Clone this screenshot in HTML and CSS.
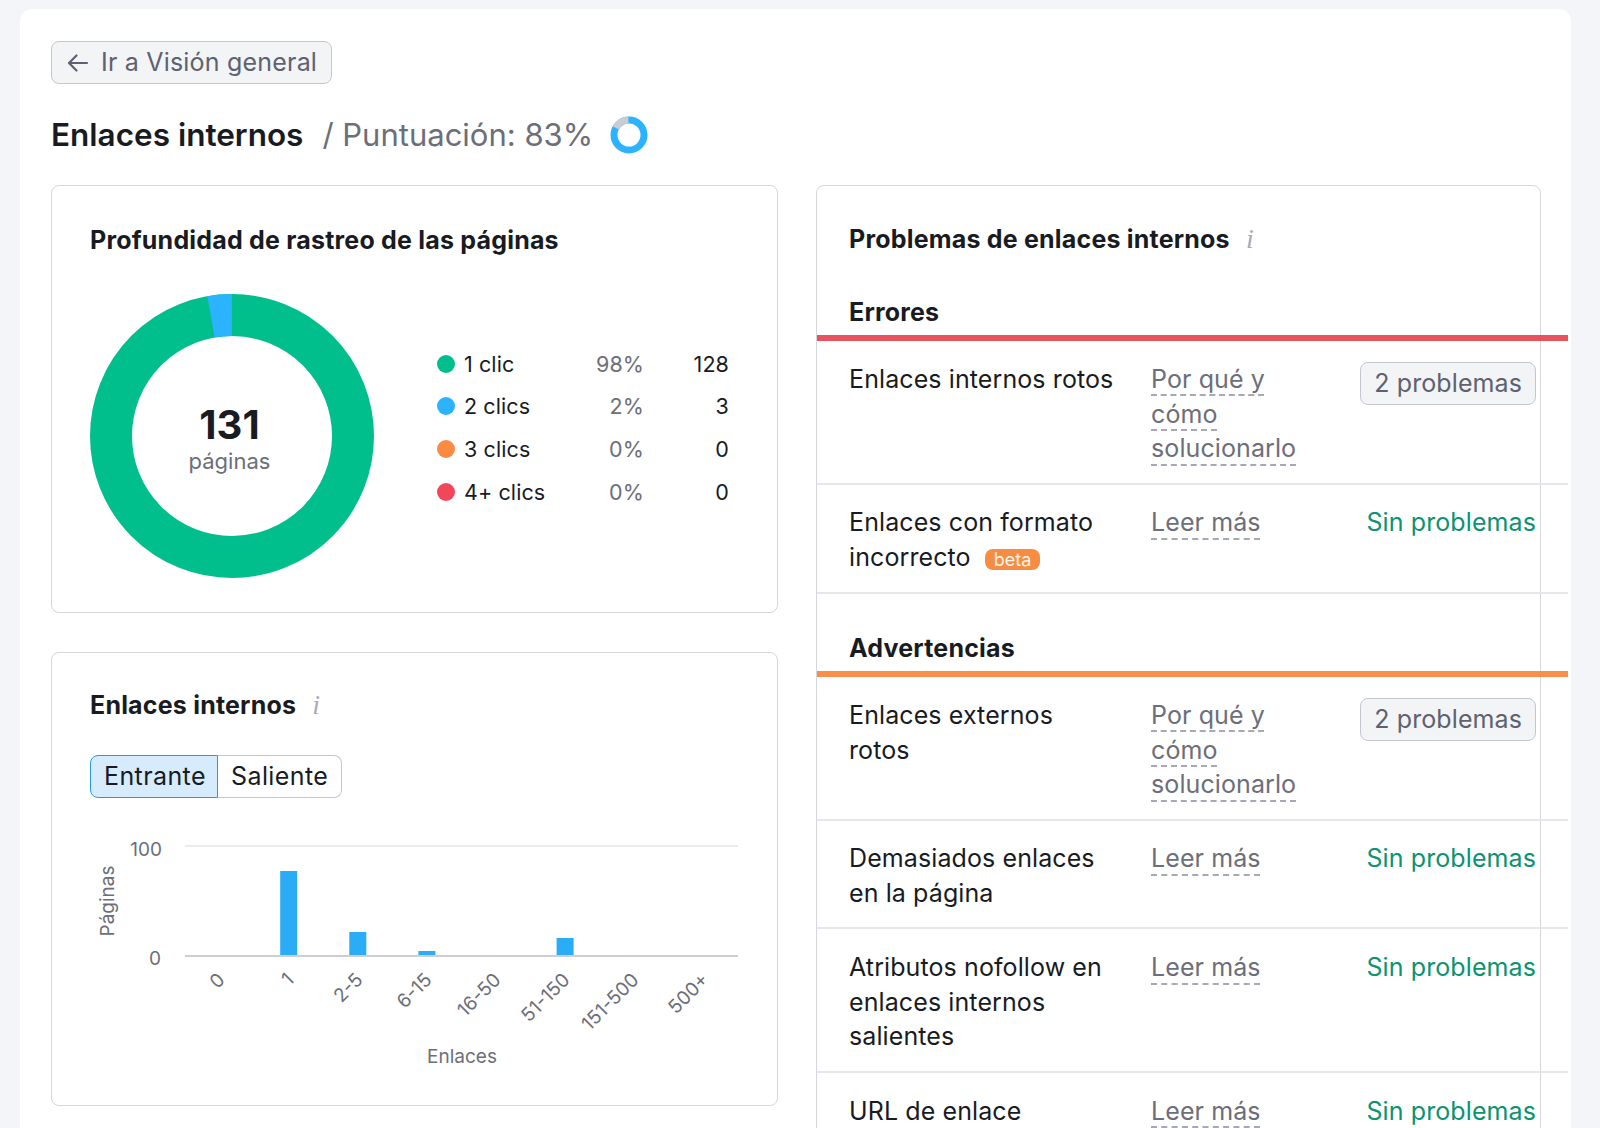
FILE: index.html
```html
<!DOCTYPE html>
<html lang="es">
<head>
<meta charset="utf-8">
<title>Enlaces internos</title>
<link rel="stylesheet" href="styles.css">
</head>
<body>
<div class="panel">
  <button class="back-btn" type="button">
    <svg class="back-arrow" width="24" height="24" viewBox="0 0 24 24" aria-hidden="true">
      <path d="M21 12H3.5M10.5 4.5L3 12l7.5 7.5" fill="none" stroke="currentColor" stroke-width="2.2" stroke-linecap="round" stroke-linejoin="round"/>
    </svg>
    <span>Ir a Visión general</span>
  </button>

  <h1 class="page-title">
    <span class="t-main">Enlaces internos</span>
    <span class="t-score">/ Puntuación: 83%</span>
    <svg class="score-ring" width="38" height="38" viewBox="0 0 38 38" aria-hidden="true">
      <circle cx="19" cy="19" r="15" fill="none" stroke="#2bb3ff" stroke-width="7"/>
      <circle cx="19" cy="19" r="15" fill="none" stroke="#c9ccd4" stroke-width="7" stroke-dasharray="15.5 200" transform="rotate(-152 19 19)"/>
    </svg>
  </h1>

  <div class="grid">
    <div class="col-left">
      <section class="card card-depth">
        <h2 class="card-title">Profundidad de rastreo de las páginas</h2>
        <div class="depth-body">
          <div class="donut">
            <svg width="284" height="284" viewBox="0 0 284 284" aria-hidden="true">
              <circle cx="142" cy="142" r="121" fill="none" stroke="#00bf8c" stroke-width="42"/>
              <circle cx="142" cy="142" r="121" fill="none" stroke="#2bb3ff" stroke-width="42" stroke-dasharray="21 800" transform="rotate(-100 142 142)"/>
            </svg>
            <div class="donut-center">
              <div class="donut-num">131</div>
              <div class="donut-label">páginas</div>
            </div>
          </div>
          <div class="legend">
            <div class="lg-name"><span class="dot dot-green"></span>1 clic</div>
            <div class="lg-pct">98%</div>
            <div class="lg-num">128</div>
            <div class="lg-name"><span class="dot dot-blue"></span>2 clics</div>
            <div class="lg-pct">2%</div>
            <div class="lg-num">3</div>
            <div class="lg-name"><span class="dot dot-orange"></span>3 clics</div>
            <div class="lg-pct">0%</div>
            <div class="lg-num">0</div>
            <div class="lg-name"><span class="dot dot-red"></span>4+ clics</div>
            <div class="lg-pct">0%</div>
            <div class="lg-num">0</div>
          </div>
        </div>
      </section>

      <section class="card card-links">
        <h2 class="card-title">Enlaces internos <span class="info">i</span></h2>
        <div class="toggle">
          <span class="tg tg-active">Entrante</span><span class="tg">Saliente</span>
        </div>
        <svg class="chart" width="660" height="260" viewBox="0 0 660 260" aria-hidden="true">
          <line x1="95" y1="31" x2="648" y2="31" stroke="#e3e4e8" stroke-width="1.5"/>
          <text class="ax" x="72" y="41" text-anchor="end">100</text>
          <text class="ax" x="71" y="150" text-anchor="end">0</text>
          <rect x="190.2" y="56" width="17" height="85" fill="#2bacf6"/>
          <rect x="259.3" y="117" width="17" height="24" fill="#2bacf6"/>
          <rect x="328.4" y="136" width="17" height="5" fill="#2bacf6"/>
          <rect x="466.6" y="123" width="17" height="18" fill="#2bacf6"/>
          <line x1="95" y1="141" x2="648" y2="141" stroke="#cdcfd5" stroke-width="2"/>
          <text class="ax" x="136" y="166" text-anchor="end" transform="rotate(-45 136 166)">0</text>
          <text class="ax" x="205" y="166" text-anchor="end" transform="rotate(-45 205 166)">1</text>
          <text class="ax" x="274" y="166" text-anchor="end" transform="rotate(-45 274 166)">2-5</text>
          <text class="ax" x="343" y="166" text-anchor="end" transform="rotate(-45 343 166)">6-15</text>
          <text class="ax" x="412" y="166" text-anchor="end" transform="rotate(-45 412 166)">16-50</text>
          <text class="ax" x="481" y="166" text-anchor="end" transform="rotate(-45 481 166)">51-150</text>
          <text class="ax" x="550" y="166" text-anchor="end" transform="rotate(-45 550 166)">151-500</text>
          <text class="ax" x="620" y="166" text-anchor="end" transform="rotate(-45 620 166)">500+</text>
          <text class="ax" text-anchor="middle" transform="translate(24 86) rotate(-90)">Páginas</text>
          <text class="ax" x="372" y="248" text-anchor="middle">Enlaces</text>
        </svg>
      </section>
    </div>

    <section class="card card-issues">
      <h2 class="card-title issues-title">Problemas de enlaces internos <span class="info">i</span></h2>

      <h3 class="sec-head sec-errors">Errores</h3>
      <div class="row">
        <div class="r-name">Enlaces internos rotos</div>
        <div class="r-link"><span class="dash">Por qué y cómo solucionarlo</span></div>
        <div class="r-status"><span class="badge">2 problemas</span></div>
      </div>
      <div class="row">
        <div class="r-name">Enlaces con formato incorrecto <span class="beta">beta</span></div>
        <div class="r-link"><span class="dash">Leer más</span></div>
        <div class="r-status ok">Sin problemas</div>
      </div>

      <h3 class="sec-head sec-warnings">Advertencias</h3>
      <div class="row">
        <div class="r-name">Enlaces externos rotos</div>
        <div class="r-link"><span class="dash">Por qué y cómo solucionarlo</span></div>
        <div class="r-status"><span class="badge">2 problemas</span></div>
      </div>
      <div class="row">
        <div class="r-name">Demasiados enlaces en la página</div>
        <div class="r-link"><span class="dash">Leer más</span></div>
        <div class="r-status ok">Sin problemas</div>
      </div>
      <div class="row">
        <div class="r-name">Atributos nofollow en enlaces internos salientes</div>
        <div class="r-link"><span class="dash">Leer más</span></div>
        <div class="r-status ok">Sin problemas</div>
      </div>
      <div class="row">
        <div class="r-name">URL de enlace</div>
        <div class="r-link"><span class="dash">Leer más</span></div>
        <div class="r-status ok">Sin problemas</div>
      </div>
    </section>
  </div>
</div>
</body>
</html>
```

FILE: styles.css
```css
html, body {
  margin: 0;
  padding: 0;
  height: 100%;
  overflow: hidden;
}

body {
  background: #f4f5f9;
  font-family: "Inter", "Noto Sans", "Liberation Sans", sans-serif;
  color: #191b23;
}

.panel {
  margin: 9px 29px 0 20px;
  background: #ffffff;
  border-radius: 12px;
  padding: 32px 30px 200px 31px;
}

/* back button */
.back-btn {
  display: inline-flex;
  align-items: center;
  gap: 11px;
  height: 43px;
  box-sizing: border-box;
  padding: 0 14px 0 14px;
  border: 1.5px solid #c4c7cf;
  border-radius: 8px;
  background: #f3f4f6;
  color: #5e6170;
  font-family: "Inter", "Noto Sans", sans-serif;
  font-size: 25px;
  letter-spacing: 0.2px;
  line-height: 1;
}

.back-arrow {
  display: block;
}

/* page title */
.page-title {
  display: flex;
  align-items: center;
  height: 37px;
  margin: 32px 0 0;
  font-size: 31px;
  font-weight: 400;
  line-height: 37px;
}

.t-main {
  font-weight: 600;
  font-size: 31.5px;
  color: #191b23;
}

.t-score {
  margin-left: 19px;
  color: #6c6e79;
}

.score-ring {
  margin-left: 17px;
  display: block;
}

/* layout grid */
.grid {
  display: grid;
  grid-template-columns: 727px 725px;
  column-gap: 38px;
  align-items: start;
  margin-top: 32px;
}

.col-left {
  display: flex;
  flex-direction: column;
  gap: 39px;
}

.card {
  background: #ffffff;
  border: 1.5px solid #d4d6dc;
  border-radius: 8px;
}

.card-title {
  margin: 0;
  font-size: 25px;
  font-weight: 700;
  line-height: 34.6px;
  color: #191b23;
  letter-spacing: 0.2px;
}

.info {
  display: inline-block;
  margin-left: 10px;
  font-family: "Liberation Serif", "DejaVu Serif", serif;
  font-style: italic;
  font-weight: 400;
  font-size: 28px;
  color: #a9abb6;
}

/* depth card */
.card-depth {
  padding: 36.5px 38px 34px 38px;
}

.depth-body {
  display: flex;
  align-items: flex-start;
  margin-top: 37px;
}

.donut {
  position: relative;
  width: 284px;
  height: 284px;
}

.donut svg {
  display: block;
}

.donut-center {
  position: absolute;
  left: 0;
  right: 0;
  top: 108px;
  text-align: center;
}

.donut-num {
  font-size: 40px;
  font-weight: 700;
  line-height: 46px;
  color: #191b23;
  margin-left: -5px;
}

.donut-label {
  font-size: 22px;
  line-height: 26px;
  color: #6c6e79;
  margin-left: -5px;
}

.legend {
  display: grid;
  grid-template-columns: 131px 76px 85px;
  grid-auto-rows: 42.6px;
  align-items: center;
  margin-left: 63px;
  margin-top: 48.5px;
  font-size: 21.5px;
  letter-spacing: 0.1px;
  color: #191b23;
}

.lg-name {
  display: flex;
  align-items: center;
  gap: 9px;
}

.lg-pct {
  text-align: right;
  color: #6c6e79;
}

.lg-num {
  text-align: right;
}

.dot {
  display: inline-block;
  width: 18px;
  height: 18px;
  border-radius: 50%;
}

.dot-green { background: #00bf8c; }
.dot-blue { background: #2bb3ff; }
.dot-orange { background: #f98c42; }
.dot-red { background: #f0475a; }

/* links card */
.card-links {
  padding: 34.5px 38px 30px 38px;
}

.toggle {
  display: inline-flex;
  margin-top: 33px;
  height: 43px;
  font-size: 25px;
  letter-spacing: 0.4px;
  line-height: 1;
}

.tg {
  display: flex;
  align-items: center;
  box-sizing: border-box;
  height: 43px;
  padding: 0 13px 0 13px;
  border: 1.5px solid #c4c7cf;
  border-left: none;
  border-radius: 0 8px 8px 0;
  color: #191b23;
  background: #ffffff;
}

.tg-active {
  border: 1.5px solid #2d97e3;
  border-radius: 8px 0 0 8px;
  background: #d6ecfd;
  width: 128px;
}

.chart {
  display: block;
  margin-top: 17px;
}

.ax {
  font-family: "Inter", "Noto Sans", sans-serif;
  font-size: 19px;
  fill: #6c6e79;
}

/* issues card */
.card-issues {
  padding: 36px 0 0 0;
  min-height: 1100px;
}

.issues-title {
  padding: 0 32px;
}

.sec-head {
  margin: 38.5px -28px 0 0;
  padding: 0 32px 5.5px;
  font-size: 25px;
  font-weight: 700;
  line-height: 34.6px;
  letter-spacing: 0.2px;
  color: #191b23;
}

.sec-warnings {
  margin-top: 37.5px;
}

.sec-errors {
  border-bottom: 6px solid #e8525e;
}

.sec-warnings {
  border-bottom: 6px solid #f98f4b;
}

.row {
  display: grid;
  grid-template-columns: 270px 160px 1fr;
  column-gap: 32px;
  margin-right: -28px;
  padding: 20.8px 32px 16.9px;
  border-bottom: 2px solid #e6e7eb;
  font-size: 25px;
  letter-spacing: 0.1px;
  line-height: 34.6px;
  color: #191b23;
}

.r-link {
  color: #6c6e79;
}

.dash {
  text-decoration: underline dashed #a6a8b3;
  text-decoration-thickness: 1.5px;
  text-underline-offset: 7px;
}

.r-status {
  justify-self: end;
  align-self: start;
  white-space: nowrap;
}

.r-status.ok {
  color: #0c9370;
}

.badge {
  display: flex;
  align-items: center;
  box-sizing: border-box;
  height: 43px;
  padding: 0 13px;
  border: 1.5px solid #c4c7cf;
  border-radius: 8px;
  background: #f3f4f6;
  color: #5e6170;
  white-space: nowrap;
}

.beta {
  display: inline-block;
  margin-left: 7px;
  padding: 0 9px;
  height: 21px;
  line-height: 21px;
  border-radius: 8px;
  background: #f78d43;
  color: #fff4ea;
  font-size: 18px;
  letter-spacing: 0;
  vertical-align: middle;
}
```
